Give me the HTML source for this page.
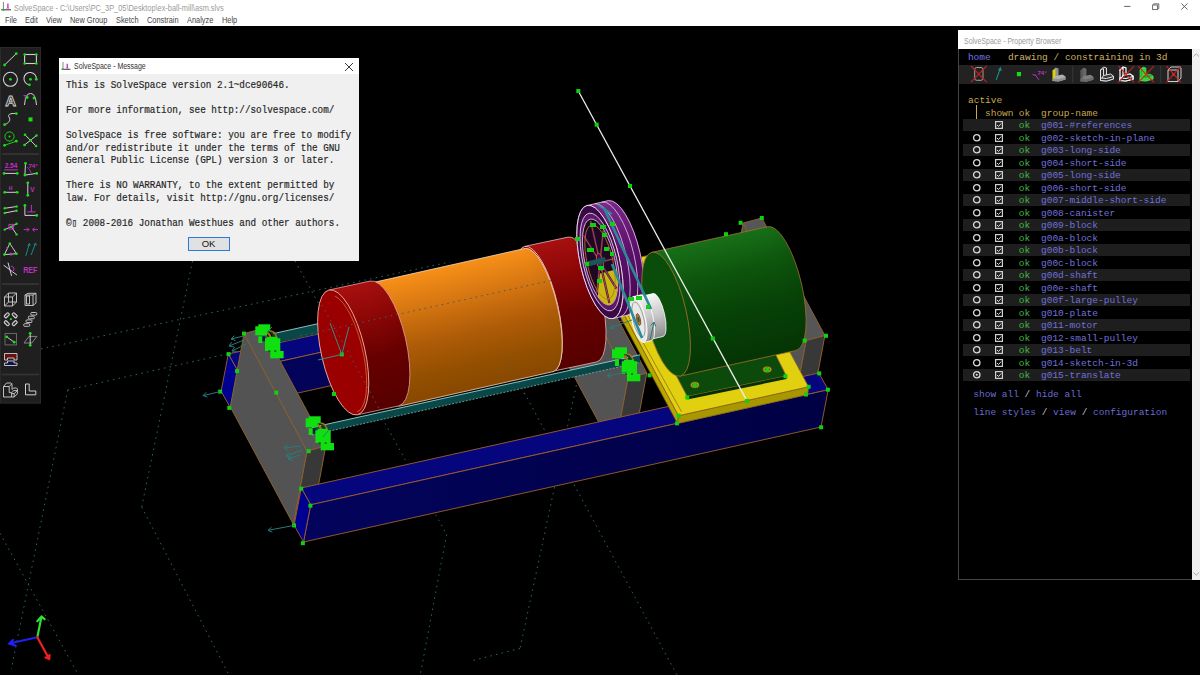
<!DOCTYPE html>
<html><head><meta charset="utf-8">
<style>
*{margin:0;padding:0;box-sizing:border-box}
body{width:1200px;height:675px;overflow:hidden;background:#000;position:relative;font-family:"Liberation Sans",sans-serif}
.abs{position:absolute}
#title{left:0;top:0;width:1200px;height:26.3px;background:#fff}
.sui{position:absolute;font-size:9px;line-height:10px;white-space:nowrap;transform:scaleX(0.82);transform-origin:0 0}
#dlg{left:59px;top:58px;width:300px;height:203px;background:#f0f0f0}
.dl{position:absolute;left:7px;font-family:"Liberation Mono",monospace;font-size:11px;line-height:12.5px;white-space:pre;color:#262626;-webkit-text-stroke:0.2px #262626;transform:scaleX(0.847);transform-origin:0 0}
#pb{left:958px;top:30px;width:242px;height:550px;background:#000}
.pt{position:absolute;font-family:"Liberation Mono",monospace;font-size:9.5px;line-height:13px;white-space:pre}
</style></head><body>
<svg class="abs" style="left:0;top:0" width="1200" height="675" viewBox="0 0 1200 675">
<defs><linearGradient id="gBeamF" x1="0" y1="0" x2="1" y2="0"><stop offset="0" stop-color="#03035c"/><stop offset="1" stop-color="#000044"/></linearGradient><linearGradient id="cg1" gradientUnits="userSpaceOnUse" x1="524.6" y1="246.4" x2="553.2" y2="371.2"><stop offset="0" stop-color="#a81010"/><stop offset="0.3" stop-color="#8a0606"/><stop offset="0.6" stop-color="#660000"/><stop offset="1" stop-color="#560000"/></linearGradient><linearGradient id="cg2" gradientUnits="userSpaceOnUse" x1="370.5" y1="283.1" x2="398.7" y2="406.3"><stop offset="0" stop-color="#f89018"/><stop offset="0.25" stop-color="#d87812"/><stop offset="0.55" stop-color="#b05c08"/><stop offset="0.8" stop-color="#945000"/><stop offset="1" stop-color="#884800"/></linearGradient><linearGradient id="cg3" gradientUnits="userSpaceOnUse" x1="328.9" y1="290.0" x2="357.5" y2="414.8"><stop offset="0" stop-color="#a81010"/><stop offset="0.3" stop-color="#8a0606"/><stop offset="0.6" stop-color="#660000"/><stop offset="1" stop-color="#560000"/></linearGradient><linearGradient id="cg4" gradientUnits="userSpaceOnUse" x1="587.1" y1="205.5" x2="612.9" y2="318.5"><stop offset="0" stop-color="#7a2a8a"/><stop offset="0.5" stop-color="#5a1068"/><stop offset="1" stop-color="#42084e"/></linearGradient><linearGradient id="cg5" gradientUnits="userSpaceOnUse" x1="651.9" y1="252.3" x2="680.3" y2="376.1"><stop offset="0" stop-color="#187018"/><stop offset="0.3" stop-color="#0d540d"/><stop offset="0.6" stop-color="#074207"/><stop offset="1" stop-color="#053405"/></linearGradient><linearGradient id="cg6" gradientUnits="userSpaceOnUse" x1="641.4" y1="296.3" x2="651.2" y2="339.2"><stop offset="0" stop-color="#f8f8f8"/><stop offset="0.5" stop-color="#c8c8c8"/><stop offset="1" stop-color="#8a8a8a"/></linearGradient><linearGradient id="cg7" gradientUnits="userSpaceOnUse" x1="633.3" y1="296.6" x2="643.7" y2="342.4"><stop offset="0" stop-color="#f8f8f8"/><stop offset="0.5" stop-color="#c8c8c8"/><stop offset="1" stop-color="#8a8a8a"/></linearGradient></defs>
<line x1="41.0" y1="349.0" x2="450.0" y2="262.0" stroke="#2a6464" stroke-width="1" stroke-dasharray="1.6 4.2"/>
<line x1="67.7" y1="390.0" x2="553.5" y2="280.0" stroke="#2a6464" stroke-width="1" stroke-dasharray="1.6 4.2"/>
<line x1="67.7" y1="390.0" x2="11.3" y2="669.3" stroke="#2a6464" stroke-width="1" stroke-dasharray="1.6 4.2"/>
<line x1="192.5" y1="261.0" x2="141.7" y2="506.9" stroke="#2a6464" stroke-width="1" stroke-dasharray="1.6 4.2"/>
<line x1="141.7" y1="506.9" x2="229.0" y2="675.0" stroke="#2a6464" stroke-width="1" stroke-dasharray="1.6 4.2"/>
<line x1="0.0" y1="533.3" x2="78.5" y2="675.0" stroke="#2a6464" stroke-width="1" stroke-dasharray="1.6 4.2"/>
<line x1="295.0" y1="261.0" x2="446.6" y2="534.4" stroke="#2a6464" stroke-width="1" stroke-dasharray="1.6 4.2"/>
<line x1="446.6" y1="534.4" x2="420.2" y2="675.0" stroke="#2a6464" stroke-width="1" stroke-dasharray="1.6 4.2"/>
<line x1="505.0" y1="357.0" x2="677.0" y2="675.0" stroke="#2a6464" stroke-width="1" stroke-dasharray="1.6 4.2"/>
<line x1="580.0" y1="368.0" x2="520.0" y2="648.5" stroke="#2a6464" stroke-width="1" stroke-dasharray="1.6 4.2"/>
<line x1="520.0" y1="648.5" x2="471.0" y2="661.0" stroke="#2a6464" stroke-width="1" stroke-dasharray="1.6 4.2"/>
<polygon points="228.3,354.0 745.8,239.0 755.2,255.8 237.7,370.8" fill="#05057e" stroke="#a0602a" stroke-width="0.9" />
<polygon points="237.7,370.8 755.2,255.8 748.0,293.0 230.5,408.0" fill="url(#gBeamF)" stroke="#a0602a" stroke-width="0.9" />
<polygon points="228.3,354.0 237.7,370.8 230.5,408.0 221.1,391.2" fill="#000090" stroke="#a0602a" stroke-width="0.9" />
<polygon points="743.1,223.1 806.2,340.6 792.5,413.9 729.4,296.4" fill="#535353" stroke="#8a6030" stroke-width="1" />
<polygon points="743.1,223.1 761.8,218.0 824.9,335.5 806.2,340.6" fill="#565656" stroke="#8a6030" stroke-width="1" />
<polygon points="806.2,340.6 824.9,335.5 811.2,408.8 792.5,413.9" fill="#383838" stroke="#8a6030" stroke-width="1" />
<polygon points="565.0,260.6 628.1,378.1 614.4,451.4 551.3,333.9" fill="#535353" stroke="#8a6030" stroke-width="1" />
<polygon points="565.0,260.6 583.7,255.5 646.8,373.0 628.1,378.1" fill="#565656" stroke="#8a6030" stroke-width="1" />
<polygon points="628.1,378.1 646.8,373.0 633.1,446.3 614.4,451.4" fill="#383838" stroke="#8a6030" stroke-width="1" />
<polygon points="244.0,333.6 307.1,451.1 293.4,524.4 230.3,406.9" fill="#535353" stroke="#8a6030" stroke-width="1" />
<polygon points="244.0,333.6 262.7,328.5 325.8,446.0 307.1,451.1" fill="#565656" stroke="#8a6030" stroke-width="1" />
<polygon points="307.1,451.1 325.8,446.0 312.1,519.3 293.4,524.4" fill="#383838" stroke="#8a6030" stroke-width="1" />
<polygon points="272.0,333.9 600.0,261.2 600.0,271.2 272.0,343.9" fill="#0a4848" />
<line x1="272.0" y1="333.9" x2="600.0" y2="261.2" stroke="#9ad0d0" stroke-width="0.9" />
<ellipse cx="582.5" cy="299.5" rx="19.2" ry="64.0" transform="rotate(-12.90 582.5 299.5)" fill="url(#cg1)" />
<polygon points="524.6,246.4 568.2,237.1 596.8,361.9 553.2,371.2" fill="url(#cg1)" />
<line x1="524.6" y1="246.4" x2="568.2" y2="237.1" stroke="#e8b8b8" stroke-width="0.8" />
<line x1="553.2" y1="371.2" x2="596.8" y2="361.9" stroke="#e8b8b8" stroke-width="0.8" />
<path d="M568.2,237.1 A19.2,64.0 -12.90 0 1 596.8,361.9" fill="none" stroke="#e8b8b8" stroke-width="0.8"/>
<ellipse cx="538.9" cy="308.8" rx="19.2" ry="64.0" transform="rotate(-12.90 538.9 308.8)" fill="#8c0404" stroke="#f0d0d0" stroke-width="0.8" />
<ellipse cx="539.2" cy="310.0" rx="19.0" ry="63.2" transform="rotate(-12.90 539.2 310.0)" fill="url(#cg2)" />
<polygon points="370.5,283.1 525.1,248.4 553.3,371.6 398.7,406.3" fill="url(#cg2)" />
<line x1="370.5" y1="283.1" x2="525.1" y2="248.4" stroke="#f4d8c0" stroke-width="0.8" />
<line x1="398.7" y1="406.3" x2="553.3" y2="371.6" stroke="#f4d8c0" stroke-width="0.8" />
<path d="M525.1,248.4 A19.0,63.2 -12.90 0 1 553.3,371.6" fill="none" stroke="#f4d8c0" stroke-width="0.8"/>
<ellipse cx="384.6" cy="344.7" rx="19.0" ry="63.2" transform="rotate(-12.90 384.6 344.7)" fill="#c06a10" />
<ellipse cx="384.3" cy="343.5" rx="21.8" ry="64.0" transform="rotate(-12.90 384.3 343.5)" fill="url(#cg3)" />
<polygon points="328.9,290.0 370.0,281.1 398.6,405.9 357.5,414.8" fill="url(#cg3)" />
<line x1="328.9" y1="290.0" x2="370.0" y2="281.1" stroke="#e0a0a0" stroke-width="0.8" />
<line x1="357.5" y1="414.8" x2="398.6" y2="405.9" stroke="#e0a0a0" stroke-width="0.8" />
<path d="M370.0,281.1 A21.8,64.0 -12.90 0 1 398.6,405.9" fill="none" stroke="#e0a0a0" stroke-width="0.8"/>
<ellipse cx="343.2" cy="352.4" rx="21.8" ry="64.0" transform="rotate(-12.90 343.2 352.4)" fill="#9a0000" stroke="#f0c0b0" stroke-width="0.8" />
<path d="M335,296 A20,60 -12.9 0 1 357,412" fill="none" stroke="#c87040" stroke-width="0.8"/>
<polygon points="312.0,427.5 640.0,354.8 640.0,362.3 312.0,435.0" fill="#0a4848" />
<line x1="312.0" y1="427.5" x2="640.0" y2="354.8" stroke="#9ad0d0" stroke-width="0.9" />
<line x1="312.0" y1="435.0" x2="640.0" y2="362.3" stroke="#80b0b0" stroke-width="0.8" stroke-dasharray="2 1.5"/>
<polygon points="301.3,488.0 818.8,373.0 828.2,389.8 310.7,504.8" fill="#05057e" stroke="#a0602a" stroke-width="0.9" />
<polygon points="310.7,504.8 828.2,389.8 821.0,427.0 303.5,542.0" fill="url(#gBeamF)" stroke="#a0602a" stroke-width="0.9" />
<polygon points="301.3,488.0 310.7,504.8 303.5,542.0 294.1,525.2" fill="#000090" stroke="#a0602a" stroke-width="0.9" />
<polygon points="598.4,266.5 678.5,415.7 677.6,423.5 597.5,274.3" fill="#b8a800" stroke="#8a6020" stroke-width="0.8" />
<polygon points="678.5,415.7 808.6,386.8 807.7,394.6 677.6,423.5" fill="#a89800" stroke="#8a6020" stroke-width="0.8" />
<polygon points="598.4,266.5 728.5,237.6 808.6,386.8 678.5,415.7" fill="#e0d010" stroke="#8a6020" stroke-width="0.8" />
<line x1="602.4" y1="269.5" x2="681.5" y2="411.7" stroke="#8a6020" stroke-width="0.7" />
<polygon points="675.6,374.5 774.9,353.0 786.4,376.0 687.2,396.5" fill="#0c4a0c" stroke="#a07030" stroke-width="0.8" />
<polygon points="687.2,396.5 786.4,376.0 786.6,379.0 687.4,399.5" fill="#062e06" />
<ellipse cx="694.9" cy="384.9" rx="4.2" ry="3" fill="#c8a020" stroke="#805010" stroke-width="0.6"/>
<ellipse cx="694.9" cy="384.9" rx="2.6" ry="1.9" fill="#0a3a0a"/>
<ellipse cx="767.2" cy="369.5" rx="4.2" ry="3" fill="#c8a020" stroke="#805010" stroke-width="0.6"/>
<ellipse cx="767.2" cy="369.5" rx="2.6" ry="1.9" fill="#0a3a0a"/>
<ellipse cx="621.4" cy="257.1" rx="19.7" ry="58.0" transform="rotate(-12.90 621.4 257.1)" fill="url(#cg4)" />
<polygon points="587.1,205.5 608.5,200.6 634.4,313.6 612.9,318.5" fill="url(#cg4)" />
<line x1="587.1" y1="205.5" x2="608.5" y2="200.6" stroke="#f0d0f0" stroke-width="0.8" />
<line x1="612.9" y1="318.5" x2="634.4" y2="313.6" stroke="#f0d0f0" stroke-width="0.8" />
<path d="M608.5,200.6 A19.7,58.0 -12.90 0 1 634.4,313.6" fill="none" stroke="#f0d0f0" stroke-width="0.8"/>
<ellipse cx="600.0" cy="262.0" rx="19.7" ry="58.0" transform="rotate(-12.90 600.0 262.0)" fill="#3a0642" stroke="#f0d0f0" stroke-width="0.8" />
<path d="M594.9,203.7 A19.7,58 -12.90 0 1 620.7,316.7" fill="none" stroke="#e8c8ec" stroke-width="0.8"/>
<path d="M601.7,202.1 A19.7,58 -12.90 0 1 627.6,315.2" fill="none" stroke="#e8c8ec" stroke-width="0.8"/>
<ellipse cx="600.0" cy="262.0" rx="19.7" ry="58.0" transform="rotate(-12.90 600.0 262.0)" fill="#3a0a44" stroke="#f0d8f0" stroke-width="0.9" />
<ellipse cx="600.0" cy="262.0" rx="17.0" ry="50.0" transform="rotate(-12.90 600.0 262.0)" fill="#5a1a6a" stroke="#f0d0f0" stroke-width="0.8" />
<ellipse cx="600.0" cy="262.0" rx="15.0" ry="44.0" transform="rotate(-12.90 600.0 262.0)" fill="#1e0824" stroke="#e8c0e8" stroke-width="0.8" />
<clipPath id="pint"><ellipse cx="600" cy="262" rx="15.0" ry="44" transform="rotate(-12.90 600 262)"/></clipPath>
<polygon clip-path="url(#pint)" points="598,274 630,266 630,322 598,322" fill="#c8b810"/>
<line x1="600.0" y1="262.0" x2="613.9" y2="258.8" stroke="#4a1050" stroke-width="2.2" />
<line x1="600.0" y1="262.0" x2="613.9" y2="258.8" stroke="#c07030" stroke-width="0.7" />
<line x1="600.0" y1="262.0" x2="616.5" y2="288.7" stroke="#4a1050" stroke-width="2.2" />
<line x1="600.0" y1="262.0" x2="616.5" y2="288.7" stroke="#c07030" stroke-width="0.7" />
<line x1="600.0" y1="262.0" x2="609.4" y2="302.9" stroke="#4a1050" stroke-width="2.2" />
<line x1="600.0" y1="262.0" x2="609.4" y2="302.9" stroke="#c07030" stroke-width="0.7" />
<line x1="600.0" y1="262.0" x2="596.8" y2="293.2" stroke="#4a1050" stroke-width="2.2" />
<line x1="600.0" y1="262.0" x2="596.8" y2="293.2" stroke="#c07030" stroke-width="0.7" />
<line x1="600.0" y1="262.0" x2="586.1" y2="265.2" stroke="#4a1050" stroke-width="2.2" />
<line x1="600.0" y1="262.0" x2="586.1" y2="265.2" stroke="#c07030" stroke-width="0.7" />
<line x1="600.0" y1="262.0" x2="583.5" y2="235.3" stroke="#4a1050" stroke-width="2.2" />
<line x1="600.0" y1="262.0" x2="583.5" y2="235.3" stroke="#c07030" stroke-width="0.7" />
<line x1="600.0" y1="262.0" x2="590.6" y2="221.1" stroke="#4a1050" stroke-width="2.2" />
<line x1="600.0" y1="262.0" x2="590.6" y2="221.1" stroke="#c07030" stroke-width="0.7" />
<line x1="600.0" y1="262.0" x2="603.2" y2="230.8" stroke="#4a1050" stroke-width="2.2" />
<line x1="600.0" y1="262.0" x2="603.2" y2="230.8" stroke="#c07030" stroke-width="0.7" />
<ellipse cx="600.0" cy="262.0" rx="12.9" ry="38.0" transform="rotate(-12.90 600.0 262.0)" fill="none" stroke="#c07030" stroke-width="0.8" />
<ellipse cx="600.0" cy="262.0" rx="3.1" ry="9.0" transform="rotate(-12.90 600.0 262.0)" fill="#4a0a5a" stroke="#c07030" stroke-width="0.8" />
<ellipse cx="600.0" cy="262.0" rx="1.4" ry="4.0" transform="rotate(-12.90 600.0 262.0)" fill="#1a5656" />
<polygon points="585.0,262.0 605.0,257.0 606.0,262.0 586.0,267.0" fill="#1a5656" />
<ellipse cx="781.8" cy="288.6" rx="20.3" ry="63.5" transform="rotate(-12.90 781.8 288.6)" fill="url(#cg5)" />
<polygon points="651.9,252.3 767.6,226.7 796.0,350.5 680.3,376.1" fill="url(#cg5)" />
<line x1="651.9" y1="252.3" x2="767.6" y2="226.7" stroke="#a07030" stroke-width="0.8" />
<line x1="680.3" y1="376.1" x2="796.0" y2="350.5" stroke="#a07030" stroke-width="0.8" />
<path d="M767.6,226.7 A20.3,63.5 -12.90 0 1 796.0,350.5" fill="none" stroke="#a07030" stroke-width="0.8"/>
<ellipse cx="666.1" cy="314.2" rx="20.3" ry="63.5" transform="rotate(-12.90 666.1 314.2)" fill="#0a4c0a" stroke="#a07030" stroke-width="0.8" />
<ellipse cx="658.0" cy="315.0" rx="6.6" ry="22.0" transform="rotate(-12.90 658.0 315.0)" fill="url(#cg6)" />
<polygon points="641.4,296.3 653.1,293.6 662.9,336.5 651.2,339.2" fill="url(#cg6)" />
<line x1="641.4" y1="296.3" x2="653.1" y2="293.6" stroke="#ffffff" stroke-width="0.8" />
<line x1="651.2" y1="339.2" x2="662.9" y2="336.5" stroke="#ffffff" stroke-width="0.8" />
<path d="M653.1,293.6 A6.6,22.0 -12.90 0 1 662.9,336.5" fill="none" stroke="#ffffff" stroke-width="0.8"/>
<ellipse cx="646.3" cy="317.7" rx="6.6" ry="22.0" transform="rotate(-12.90 646.3 317.7)" fill="#d8d8d8" stroke="#ffffff" stroke-width="0.8" />
<ellipse cx="646.3" cy="317.7" rx="5.1" ry="17.0" transform="rotate(-12.90 646.3 317.7)" fill="#9a9a9a" stroke="#c0c0c0" stroke-width="0.8" />
<ellipse cx="646.3" cy="317.7" rx="7.0" ry="23.5" transform="rotate(-12.90 646.3 317.7)" fill="url(#cg7)" />
<polygon points="633.3,296.6 641.1,294.8 651.5,340.6 643.7,342.4" fill="url(#cg7)" />
<line x1="633.3" y1="296.6" x2="641.1" y2="294.8" stroke="#ffffff" stroke-width="0.8" />
<line x1="643.7" y1="342.4" x2="651.5" y2="340.6" stroke="#ffffff" stroke-width="0.8" />
<path d="M641.1,294.8 A7.0,23.5 -12.90 0 1 651.5,340.6" fill="none" stroke="#ffffff" stroke-width="0.8"/>
<ellipse cx="638.5" cy="319.5" rx="7.0" ry="23.5" transform="rotate(-12.90 638.5 319.5)" fill="#e8e8e8" stroke="#ffffff" stroke-width="0.8" />
<ellipse cx="638.5" cy="319.5" rx="5.4" ry="18.0" transform="rotate(-12.90 638.5 319.5)" fill="none" stroke="#909090" stroke-width="0.8" />
<ellipse cx="638.5" cy="319.5" rx="1.8" ry="6.0" transform="rotate(-12.90 638.5 319.5)" fill="#c08030" stroke="#704010" stroke-width="0.8" />
<ellipse cx="638.5" cy="319.5" rx="0.9" ry="3.0" transform="rotate(-12.90 638.5 319.5)" fill="#1a5656" />
<line x1="604.0" y1="208.0" x2="651.0" y2="309.0" stroke="#2a8a98" stroke-width="2.6" />
<line x1="612.0" y1="264.0" x2="642.0" y2="338.0" stroke="#2a8a98" stroke-width="2.6" />
<line x1="598.0" y1="205.0" x2="612.0" y2="214.0" stroke="#2a8a98" stroke-width="2.0" />
<line x1="578.3" y1="91.0" x2="747.0" y2="400.9" stroke="#ececec" stroke-width="1.3" />
<path d="M264.3,332.3 q5,-2 8,10" stroke="#b06a20" stroke-width="2" fill="none"/>
<path d="M267.3,331.3 q5,-2 8,10" stroke="#0c3a0c" stroke-width="2" fill="none"/>
<path d="M270.3,331.3 q5,-1 7,9" stroke="#b06a20" stroke-width="1.6" fill="none"/>
<rect x="261.3" y="336.3" width="4" height="5" fill="#0a1a3a"/>
<rect x="255.3" y="326.3" width="8" height="9" fill="#10e010"/>
<rect x="258.3" y="324.3" width="12" height="7" fill="#10e010"/>
<rect x="261.3" y="328.3" width="6" height="7" fill="#10e010"/>
<rect x="265.0" y="338.3" width="15.3" height="12.7" fill="#10e010"/>
<rect x="267.3" y="336.8" width="10" height="4" fill="#10e010"/>
<rect x="270.3" y="351.0" width="13.3" height="7.3" fill="#10e010"/>
<rect x="258.3" y="336.3" width="4" height="6.7" fill="#10e010"/>
<rect x="268.3" y="350.3" width="2" height="1.5" fill="#0a5a0a"/><rect x="274.3" y="350.3" width="2" height="1.5" fill="#0a5a0a"/>
<path d="M314.7,424.3 q5,-2 8,10" stroke="#b06a20" stroke-width="2" fill="none"/>
<path d="M317.7,423.3 q5,-2 8,10" stroke="#0c3a0c" stroke-width="2" fill="none"/>
<path d="M320.7,423.3 q5,-1 7,9" stroke="#b06a20" stroke-width="1.6" fill="none"/>
<rect x="311.7" y="428.3" width="4" height="5" fill="#0a1a3a"/>
<rect x="305.7" y="418.3" width="8" height="9" fill="#10e010"/>
<rect x="308.7" y="416.3" width="12" height="7" fill="#10e010"/>
<rect x="311.7" y="420.3" width="6" height="7" fill="#10e010"/>
<rect x="315.4" y="430.3" width="15.3" height="12.7" fill="#10e010"/>
<rect x="317.7" y="428.8" width="10" height="4" fill="#10e010"/>
<rect x="320.7" y="443.0" width="13.3" height="7.3" fill="#10e010"/>
<rect x="308.7" y="428.3" width="4" height="6.7" fill="#10e010"/>
<rect x="318.7" y="442.3" width="2" height="1.5" fill="#0a5a0a"/><rect x="324.7" y="442.3" width="2" height="1.5" fill="#0a5a0a"/>
<path d="M621,355.3 q5,-2 8,10" stroke="#b06a20" stroke-width="2" fill="none"/>
<path d="M624,354.3 q5,-2 8,10" stroke="#0c3a0c" stroke-width="2" fill="none"/>
<path d="M627,354.3 q5,-1 7,9" stroke="#b06a20" stroke-width="1.6" fill="none"/>
<rect x="618" y="359.3" width="4" height="5" fill="#0a1a3a"/>
<rect x="612.0" y="349.3" width="8" height="9" fill="#10e010"/>
<rect x="615.0" y="347.3" width="12" height="7" fill="#10e010"/>
<rect x="618.0" y="351.3" width="6" height="7" fill="#10e010"/>
<rect x="621.7" y="361.3" width="15.3" height="12.7" fill="#10e010"/>
<rect x="624.0" y="359.8" width="10" height="4" fill="#10e010"/>
<rect x="627.0" y="374.0" width="13.3" height="7.3" fill="#10e010"/>
<rect x="615.0" y="359.3" width="4" height="6.7" fill="#10e010"/>
<rect x="625" y="373.3" width="2" height="1.5" fill="#0a5a0a"/><rect x="631" y="373.3" width="2" height="1.5" fill="#0a5a0a"/>
<rect x="590" y="223" width="6" height="4" fill="#10d010"/>
<rect x="600" y="225" width="6" height="4" fill="#10d010"/>
<rect x="610" y="222" width="5" height="4" fill="#10d010"/>
<rect x="602" y="233" width="5" height="4" fill="#10d010"/>
<rect x="587" y="248" width="7" height="4" fill="#10d010"/>
<rect x="604" y="247" width="5" height="4" fill="#10d010"/>
<rect x="610" y="252" width="4" height="4" fill="#10d010"/>
<rect x="585" y="262" width="4" height="4" fill="#10d010"/>
<rect x="598" y="266" width="6" height="4" fill="#10d010"/>
<rect x="597" y="279" width="5" height="4" fill="#10d010"/>
<rect x="575" y="237" width="5" height="4" fill="#10d010"/>
<rect x="628" y="297" width="6" height="4" fill="#10d010"/>
<rect x="636" y="296" width="6" height="4" fill="#10d010"/>
<rect x="646" y="305" width="4" height="4" fill="#10d010"/>
<rect x="576.3" y="89.0" width="4" height="4" fill="#10d010"/>
<rect x="594.7" y="122.7" width="4" height="4" fill="#10d010"/>
<rect x="628.0" y="184.0" width="4" height="4" fill="#10d010"/>
<rect x="710.8" y="336.5" width="4" height="4" fill="#10d010"/>
<rect x="745.0" y="398.9" width="4" height="4" fill="#10d010"/>
<rect x="724.0" y="232.2" width="4" height="4" fill="#10d010"/>
<rect x="738.6" y="220.8" width="4" height="4" fill="#10d010"/>
<rect x="759.8" y="216.0" width="4" height="4" fill="#10d010"/>
<rect x="824.0" y="333.8" width="4" height="4" fill="#10d010"/>
<rect x="802.7" y="338.6" width="4" height="4" fill="#10d010"/>
<rect x="817.2" y="371.4" width="4" height="4" fill="#10d010"/>
<rect x="825.9" y="387.7" width="4" height="4" fill="#10d010"/>
<rect x="819.1" y="425.3" width="4" height="4" fill="#10d010"/>
<rect x="806.6" y="384.8" width="4" height="4" fill="#10d010"/>
<rect x="804.0" y="392.5" width="4" height="4" fill="#10d010"/>
<rect x="783.5" y="374.2" width="4" height="4" fill="#10d010"/>
<rect x="685.2" y="395.4" width="4" height="4" fill="#10d010"/>
<rect x="676.5" y="413.7" width="4" height="4" fill="#10d010"/>
<rect x="675.0" y="421.4" width="4" height="4" fill="#10d010"/>
<rect x="647.6" y="373.3" width="4" height="4" fill="#10d010"/>
<rect x="242.0" y="331.6" width="4" height="4" fill="#10d010"/>
<rect x="226.6" y="352.1" width="4" height="4" fill="#10d010"/>
<rect x="235.1" y="369.1" width="4" height="4" fill="#10d010"/>
<rect x="218.1" y="389.6" width="4" height="4" fill="#10d010"/>
<rect x="227.3" y="405.9" width="4" height="4" fill="#10d010"/>
<rect x="274.3" y="390.6" width="4" height="4" fill="#10d010"/>
<rect x="306.7" y="449.2" width="4" height="4" fill="#10d010"/>
<rect x="299.2" y="486.7" width="4" height="4" fill="#10d010"/>
<rect x="308.4" y="503.7" width="4" height="4" fill="#10d010"/>
<rect x="292.0" y="523.4" width="4" height="4" fill="#10d010"/>
<rect x="300.9" y="541.2" width="4" height="4" fill="#10d010"/>
<rect x="339.8" y="352.4" width="4" height="4" fill="#10d010"/>
<rect x="332.0" y="392.0" width="4" height="4" fill="#10d010"/>
<rect x="692.9" y="382.9" width="4" height="4" fill="#10d010"/>
<rect x="765.2" y="367.5" width="4" height="4" fill="#10d010"/>
<line x1="341.8" y1="354.4" x2="330.0" y2="323.0" stroke="#3a8a8a" stroke-width="1" />
<line x1="341.8" y1="354.4" x2="349.0" y2="327.0" stroke="#3a8a8a" stroke-width="1" />
<line x1="341.8" y1="354.4" x2="318.0" y2="360.0" stroke="#3a8a8a" stroke-width="1" />
<line x1="300.0" y1="336.0" x2="553.5" y2="280.0" stroke="#4a5a5a" stroke-width="1" stroke-dasharray="1.6 4.2"/>
<line x1="322.0" y1="305.0" x2="380.0" y2="410.0" stroke="#4a5a5a" stroke-width="1" stroke-dasharray="1.6 4.2"/>
<line x1="505.0" y1="357.0" x2="525.0" y2="395.0" stroke="#4a5a5a" stroke-width="1" stroke-dasharray="1.6 4.2"/>
<path d="M220.0,391.6 L203.0,395.6 M207.5,397.1 L203.0,395.6 L206.3,392.3" fill="none" stroke="#2a7a7a" stroke-width="1"/>
<path d="M294.0,525.4 L268.0,530.4 M272.4,532.1 L268.0,530.4 L271.5,527.2" fill="none" stroke="#2a7a7a" stroke-width="1"/>
<path d="M244.0,336.0 L231.0,339.0 M235.5,340.5 L231.0,339.0 L234.3,335.7" fill="none" stroke="#2a7a7a" stroke-width="1"/>
<path d="M244.0,340.0 L229.0,346.0 M233.6,346.8 L229.0,346.0 L231.8,342.2" fill="none" stroke="#2a7a7a" stroke-width="1"/>
<path d="M246.0,344.0 L232.0,351.0 M236.7,351.4 L232.0,351.0 L234.5,347.0" fill="none" stroke="#2a7a7a" stroke-width="1"/>
<path d="M302.0,446.0 L284.0,448.0 M288.3,450.0 L284.0,448.0 L287.7,445.1" fill="none" stroke="#2a7a7a" stroke-width="1"/>
<path d="M302.0,450.0 L286.0,456.0 M290.6,456.9 L286.0,456.0 L288.9,452.3" fill="none" stroke="#2a7a7a" stroke-width="1"/>
<path d="M300.0,455.0 L288.0,459.0 M292.6,460.1 L288.0,459.0 L291.0,455.4" fill="none" stroke="#2a7a7a" stroke-width="1"/>
<path d="M627.0,372.0 L607.0,376.0 M611.4,377.7 L607.0,376.0 L610.4,372.8" fill="none" stroke="#2a7a7a" stroke-width="1"/>
<path d="M632.0,320.0 L610.0,328.0 M614.6,329.0 L610.0,328.0 L612.9,324.3" fill="none" stroke="#2a7a7a" stroke-width="1"/>
<path d="M650.0,340.0 L654.0,322.0 M650.7,325.4 L654.0,322.0 L655.6,326.4" fill="none" stroke="#2a7a7a" stroke-width="1"/>
<path d="M267,332 L272,327 M323,437 L328,431" stroke="#2a7a7a" stroke-width="1"/>
<g stroke-width="2.2" fill="none" stroke-linecap="round"><path d="M37.3,637.3 L41.5,616.6 M37.3,621.2 L41.5,616.6 L44.6,619.2" stroke="#30e030"/><path d="M37.3,637.3 L9.3,643.5 M13,640 L9.3,643.5 L15.5,645.6" stroke="#2020f0"/><path d="M37.3,637.3 L49.2,659 M45.5,657.5 L49.2,659 L49.5,655" stroke="#f02020"/></g>
</svg>
<div id="title" class="abs"><svg class="abs" style="left:0;top:0" width="14" height="14" viewBox="0 0 14 14">
<line x1="3.4" y1="2" x2="3.4" y2="10" stroke="#808080" stroke-width="1"/>
<line x1="1.2" y1="9.8" x2="11" y2="9.8" stroke="#404040" stroke-width="1.1"/>
<path d="M6.2,8.6 L9.6,8.6 L8.6,7.4 L8.6,3.6 L7.2,3.6 L7.2,7.4 Z" fill="#c040c0"/>
<circle cx="3.4" cy="9.8" r="1.1" fill="#20c020"/>
</svg>
<div class="sui" style="left:14.3px;top:2.8px;color:#9a9a9a">SolveSpace - C:\Users\PC_3P_05\Desktop\ex-ball-mill\asm.slvs</div>
<div class="sui" style="left:4.7px;top:15px;color:#444">File</div><div class="sui" style="left:24.5px;top:15px;color:#444">Edit</div><div class="sui" style="left:45.8px;top:15px;color:#444">View</div><div class="sui" style="left:70px;top:15px;color:#444">New Group</div><div class="sui" style="left:116px;top:15px;color:#444">Sketch</div><div class="sui" style="left:147px;top:15px;color:#444">Constrain</div><div class="sui" style="left:187px;top:15px;color:#444">Analyze</div><div class="sui" style="left:222px;top:15px;color:#444">Help</div><svg class="abs" style="left:1100px;top:0" width="100" height="14" viewBox="0 0 100 14">
<line x1="24.2" y1="6.4" x2="30.4" y2="6.4" stroke="#505050" stroke-width="0.9"/>
<rect x="52.6" y="5" width="4.8" height="4.6" fill="none" stroke="#606060" stroke-width="0.9"/>
<path d="M53.8,5 V3.8 H58.8 V8.6 H57.4" fill="none" stroke="#606060" stroke-width="0.9"/>
<path d="M81.3,3.4 L87.5,9.6 M87.5,3.4 L81.3,9.6" stroke="#505050" stroke-width="0.9"/>
</svg></div>
<svg class="abs" style="left:0;top:0" width="41" height="404" viewBox="0 0 41 404"><rect x="0" y="47" width="41" height="356.5" fill="#1f1f1f"/><rect x="0.5" y="47.5" width="40" height="355.5" fill="none" stroke="#2a2a2a" stroke-width="1"/><rect x="2" y="153.2" width="37" height="1.8" fill="#333333"/><rect x="2" y="283.2" width="37" height="1.8" fill="#333333"/><rect x="2" y="373.59999999999997" width="37" height="1.8" fill="#333333"/><line x1="4.6" y1="65" x2="16.3" y2="53.6" stroke="#d0d0d0" stroke-width="1"/><circle cx="4.6" cy="65" r="1.4" fill="#18e018"/><circle cx="16.3" cy="53.6" r="1.4" fill="#18e018"/><rect x="24.6" y="54.5" width="11.8" height="9" fill="none" stroke="#d0d0d0" stroke-width="1.1"/><circle cx="24.6" cy="54.5" r="1.2" fill="#18e018"/><circle cx="36.4" cy="54.5" r="1.2" fill="#18e018"/><circle cx="24.6" cy="63.5" r="1.2" fill="#18e018"/><circle cx="36.4" cy="63.5" r="1.2" fill="#18e018"/><circle cx="10.4" cy="79.3" r="7" fill="none" stroke="#d0d0d0" stroke-width="1.1"/><circle cx="10.4" cy="79.3" r="1.4" fill="#18e018"/><path d="M36.3,79.3 A6.2,6.2 0 1 0 29.4,84.8" fill="none" stroke="#d0d0d0" stroke-width="1.1"/><circle cx="30.5" cy="79.3" r="1.4" fill="#18e018"/><circle cx="36.3" cy="79.3" r="1.4" fill="#18e018"/><circle cx="29.4" cy="84.8" r="1.4" fill="#18e018"/><text x="10.7" y="105.5" font-family="Liberation Sans" font-size="15" font-weight="bold" text-anchor="middle" fill="none" stroke="#d0d0d0" stroke-width="0.9">A</text><path d="M24.5,105 Q25.5,93 30.5,93.5 Q35.5,93 36.5,105" fill="none" stroke="#d0d0d0" stroke-width="1"/><circle cx="27.2" cy="97.5" r="1.4" fill="#18e018"/><circle cx="34" cy="98" r="1.4" fill="#18e018"/><text x="25" y="99" font-family="Liberation Sans" font-size="6" font-weight="bold" text-anchor="middle" fill="#c030c0">T</text><path d="M4.6,124.7 C9,123 11,120 9,117 C7,114 12,113 16.3,113.6" fill="none" stroke="#d0d0d0" stroke-width="1"/><circle cx="4.6" cy="124.7" r="1.4" fill="#18e018"/><circle cx="16.3" cy="113.6" r="1.4" fill="#18e018"/><rect x="28.5" y="117.4" width="4" height="4" fill="#18e018"/><circle cx="9.5" cy="136.5" r="4.6" fill="none" stroke="#18e018" stroke-width="0.9"/><circle cx="9.5" cy="136.5" r="1" fill="#18e018"/><line x1="4.6" y1="145.3" x2="16.3" y2="141.2" stroke="#18e018" stroke-width="0.9"/><circle cx="4.6" cy="145.3" r="1.4" fill="#18e018"/><circle cx="16.3" cy="141.2" r="1.4" fill="#18e018"/><line x1="25" y1="134.8" x2="36" y2="146" stroke="#d0d0d0" stroke-width="1"/><line x1="24.5" y1="145" x2="36.5" y2="135.5" stroke="#d0d0d0" stroke-width="1"/><circle cx="25" cy="134.8" r="1.3" fill="#18e018"/><circle cx="36" cy="146" r="1.3" fill="#18e018"/><circle cx="24.5" cy="145" r="1.3" fill="#18e018"/><circle cx="36.5" cy="135.5" r="1.3" fill="#18e018"/><circle cx="30.5" cy="140.3" r="1.3" fill="#18e018"/><text x="11" y="168" font-family="Liberation Sans" font-size="6.5" font-weight="bold" text-anchor="middle" fill="#c030c0">2.54</text><line x1="4.1" y1="169.9" x2="17.8" y2="169.9" stroke="#c030c0" stroke-width="1"/><line x1="4.1" y1="173.4" x2="17.2" y2="173.4" stroke="#d0d0d0" stroke-width="1"/><circle cx="4.1" cy="173.4" r="1.4" fill="#18e018"/><circle cx="17.2" cy="173.4" r="1.4" fill="#18e018"/><line x1="24.9" y1="175.1" x2="25.5" y2="163.3" stroke="#d0d0d0" stroke-width="1"/><line x1="24.9" y1="175.1" x2="36.7" y2="173.4" stroke="#d0d0d0" stroke-width="1"/><circle cx="24.9" cy="175.1" r="1.4" fill="#18e018"/><circle cx="25.5" cy="163.3" r="1.4" fill="#18e018"/><circle cx="36.7" cy="173.4" r="1.4" fill="#18e018"/><text x="33" y="168" font-family="Liberation Sans" font-size="6" font-weight="bold" text-anchor="middle" fill="#c030c0">74°</text><path d="M27,167 Q30,169 31,173" fill="none" stroke="#c030c0" stroke-width="0.8"/><text x="10.6" y="190.3" font-family="Liberation Sans" font-size="5" font-weight="bold" text-anchor="middle" fill="#c030c0">H</text><line x1="4.7" y1="192.3" x2="17.2" y2="192.3" stroke="#d0d0d0" stroke-width="1"/><circle cx="4.7" cy="192.3" r="1.4" fill="#18e018"/><circle cx="17.2" cy="192.3" r="1.4" fill="#18e018"/><line x1="27.8" y1="182.8" x2="27.8" y2="195.3" stroke="#d0d0d0" stroke-width="1"/><circle cx="27.8" cy="182.8" r="1.4" fill="#18e018"/><circle cx="27.8" cy="195.3" r="1.4" fill="#18e018"/><text x="32.3" y="191.8" font-family="Liberation Sans" font-size="6.5" font-weight="bold" text-anchor="middle" fill="#c030c0">V</text><line x1="4.7" y1="208.3" x2="16.6" y2="206.5" stroke="#d0d0d0" stroke-width="1"/><line x1="4.7" y1="213" x2="16.6" y2="210.7" stroke="#d0d0d0" stroke-width="1"/><circle cx="4.7" cy="208.3" r="1.2" fill="#18e018"/><circle cx="16.6" cy="206.5" r="1.2" fill="#18e018"/><circle cx="4.7" cy="213" r="1.2" fill="#18e018"/><circle cx="16.6" cy="210.7" r="1.2" fill="#18e018"/><path d="M24.9,205.4 V215.4 H36.7" fill="none" stroke="#d0d0d0" stroke-width="1"/><circle cx="24.9" cy="205.4" r="1.4" fill="#18e018"/><circle cx="36.7" cy="215.4" r="1.4" fill="#18e018"/><path d="M31.4,204.8 V211.9 M27.3,211.9 H35.5" fill="none" stroke="#c030c0" stroke-width="1"/><line x1="4.7" y1="229.6" x2="11.3" y2="226.7" stroke="#d0d0d0" stroke-width="1"/><line x1="11.3" y1="226.7" x2="16.6" y2="234.4" stroke="#d0d0d0" stroke-width="1"/><line x1="11.3" y1="226.7" x2="16.6" y2="223.7" stroke="#d0d0d0" stroke-width="1"/><rect x="9" y="224.4" width="4.6" height="4.6" fill="none" stroke="#c030c0" stroke-width="1"/><circle cx="4.7" cy="229.6" r="1.2" fill="#18e018"/><circle cx="11.3" cy="226.7" r="1.2" fill="#18e018"/><circle cx="16.6" cy="234.4" r="1.2" fill="#18e018"/><circle cx="16.6" cy="223.7" r="1.2" fill="#18e018"/><path d="M23.7,229.6 H29 M27,227.6 L29,229.6 L27,231.6 M37.9,229.6 H32.6 M34.6,227.6 L32.6,229.6 L34.6,231.6" fill="none" stroke="#c030c0" stroke-width="1"/><path d="M9.8,243.5 L4.4,254.6 L16.5,253.7 Z" fill="none" stroke="#d0d0d0" stroke-width="1"/><circle cx="9.8" cy="243.5" r="1.3" fill="#18e018"/><circle cx="4.4" cy="254.6" r="1.3" fill="#18e018"/><circle cx="16.5" cy="253.7" r="1.3" fill="#18e018"/><line x1="6" y1="247.5" x2="8" y2="249" stroke="#c030c0" stroke-width="0.8"/><line x1="12.5" y1="247.5" x2="14" y2="249.5" stroke="#c030c0" stroke-width="0.8"/><line x1="10.5" y1="252.5" x2="11" y2="256" stroke="#c030c0" stroke-width="0.8"/><path d="M25.8,255.9 L29.4,243.5 M27.6,245.5 L29.4,243.5 L30.2,246 M31.1,255 L35.6,243 M33.8,245 L35.6,243 L36.2,245.5" fill="none" stroke="#1a8a8a" stroke-width="1"/><line x1="3.6" y1="265.2" x2="16.9" y2="275" stroke="#d0d0d0" stroke-width="1"/><line x1="8" y1="262.6" x2="11.6" y2="275.9" stroke="#d0d0d0" stroke-width="1"/><path d="M11,266 Q15,267 14,270 Q13,272 11,271" fill="none" stroke="#c030c0" stroke-width="1"/><text x="30.3" y="272.5" font-family="Liberation Sans" font-size="8.5" font-weight="bold" text-anchor="middle" fill="#c030c0" textLength="14.3" lengthAdjust="spacingAndGlyphs">REF</text><path d="M4.5,297 L8.5,293 H16.5 V302 L12.5,306 H4.5 Z M4.5,297 H12.5 V306 M12.5,297 L16.5,293 M8.5,293 V302 H16.5 M8.5,302 L4.5,306" fill="none" stroke="#d0d0d0" stroke-width="0.9"/><path d="M25,295 L28,293.3 H36 V303 L33,305.5 H25 Z M25,295 H33 V305.5 M33,295 L36,293.3" fill="none" stroke="#d0d0d0" stroke-width="0.9"/><rect x="26.5" y="296" width="3" height="8" fill="none" stroke="#d0d0d0" stroke-width="0.9"/><rect x="4.1" y="313.90000000000003" width="5.4" height="2.8" rx="1" fill="#303030" stroke="#d0d0d0" stroke-width="1.1" transform="rotate(-45 6.8 315.3)"/><rect x="12.0" y="313.90000000000003" width="5.4" height="2.8" rx="1" fill="#303030" stroke="#d0d0d0" stroke-width="1.1" transform="rotate(45 14.7 315.3)"/><rect x="4.1" y="321.8" width="5.4" height="2.8" rx="1" fill="#303030" stroke="#d0d0d0" stroke-width="1.1" transform="rotate(45 6.8 323.2)"/><rect x="12.0" y="321.8" width="5.4" height="2.8" rx="1" fill="#303030" stroke="#d0d0d0" stroke-width="1.1" transform="rotate(-45 14.7 323.2)"/><circle cx="10.9" cy="319.2" r="1.1" fill="#18e018"/><rect x="30.799999999999997" y="312.5" width="6" height="2.6" rx="1" fill="none" stroke="#d0d0d0" stroke-width="0.9"/><rect x="28.3" y="316.2" width="6" height="2.6" rx="1" fill="none" stroke="#d0d0d0" stroke-width="0.9"/><rect x="26" y="319.9" width="6" height="2.6" rx="1" fill="none" stroke="#d0d0d0" stroke-width="0.9"/><rect x="23.7" y="323.7" width="6" height="2.6" rx="1" fill="none" stroke="#d0d0d0" stroke-width="0.9"/><rect x="5" y="333.4" width="11.5" height="11.5" fill="none" stroke="#707070" stroke-width="0.9"/><line x1="6.7" y1="336.8" x2="14.2" y2="342.2" stroke="#d0d0d0" stroke-width="1"/><circle cx="6.7" cy="336.8" r="1.4" fill="#18e018"/><circle cx="14.2" cy="342.2" r="1.4" fill="#18e018"/><path d="M24,343 L29,336.4 H36.9 L31.9,343 Z" fill="none" stroke="#909090" stroke-width="0.9"/><line x1="30.2" y1="333.3" x2="30.2" y2="345.3" stroke="#d0d0d0" stroke-width="1"/><circle cx="30.2" cy="333.3" r="1.4" fill="#18e018"/><circle cx="30.2" cy="345.3" r="1.4" fill="#18e018"/><path d="M4.5,353.5 H17 V360 H14 V358 H7.5 V360 H4.5 Z" fill="#6a1010" stroke="#d0d0d0" stroke-width="0.9"/><path d="M7.5,361 H14 V363 H17 V365.5 H4.5 V363 H7.5 Z" fill="#101050" stroke="#d0d0d0" stroke-width="0.9"/><path d="M3.5,386.5 L6.5,383 H10.8 L12,384.2 V389.5 L13.8,388 H16.6 L17.4,389 V393.8 L14.2,397 H3.5 Z M3.5,386.5 H9.2 L12,383.6 M9.2,386.5 V392.6 H11.6 L13.8,390.6 H17.2 M11.6,392.6 V397 M14.2,393.6 V397 M11.6,393.6 H14.2 L17.4,390.6" fill="none" stroke="#d0d0d0" stroke-width="0.9"/><path d="M25.5,384 H29.2 V391 H35.8 V394.8 H25.5 Z" fill="none" stroke="#d0d0d0" stroke-width="1"/></svg>
<div id="dlg" class="abs">
<div class="abs" style="left:0;top:0;width:300px;height:15.5px;background:#fff"><svg class="abs" style="left:2px;top:3px" width="12" height="12" viewBox="0 0 12 12">
<line x1="2" y1="1" x2="2" y2="8.5" stroke="#808080" stroke-width="0.9"/>
<line x1="0.5" y1="8.3" x2="9.5" y2="8.3" stroke="#404040" stroke-width="1"/>
<path d="M4.6,7.4 L7.8,7.4 L7,6.4 L7,2.8 L5.6,2.8 L5.6,6.4 Z" fill="#c040c0"/>
<circle cx="2" cy="8.3" r="1" fill="#20c020"/>
</svg>
<div class="sui" style="left:15px;top:2.6px;font-size:8.5px;color:#333">SolveSpace - Message</div>
<svg class="abs" style="left:284px;top:3px" width="12" height="12" viewBox="0 0 12 12"><path d="M2,2 L10,10 M10,2 L2,10" stroke="#222" stroke-width="0.9"/></svg>
</div>
<div class="abs" style="left:0;top:0"><div class="dl" style="top:21.25px">This is SolveSpace version 2.1~dce90646.</div><div class="dl" style="top:46.25px">For more information, see http://solvespace.com/</div><div class="dl" style="top:71.25px">SolveSpace is free software: you are free to modify</div><div class="dl" style="top:83.75px">and/or redistribute it under the terms of the GNU</div><div class="dl" style="top:96.25px">General Public License (GPL) version 3 or later.</div><div class="dl" style="top:121.25px">There is NO WARRANTY, to the extent permitted by</div><div class="dl" style="top:133.75px">law. For details, visit http://gnu.org/licenses/</div><div class="dl" style="top:158.75px">©▯ 2008-2016 Jonathan Westhues and other authors.</div></div>
<div class="abs" style="left:128.5px;top:178.5px;width:42px;height:14.5px;border:1px solid #2a7ad8;background:#e1e1e1"></div>
<div class="abs" style="left:128.5px;top:180px;width:42px;text-align:center;font-size:9.5px;color:#111">OK</div>
</div>
<div id="pb" class="abs">
<div class="abs" style="left:0;top:0;width:242px;height:18.9px;background:#fff">
<div class="sui" style="left:6px;top:5.5px;font-size:8.5px;color:#9a9a9a">SolveSpace - Property Browser</div></div>
<div class="abs" style="left:0;top:18.9px;width:1px;height:531px;background:#444"></div>
<div class="abs" style="left:0;top:549px;width:233.5px;height:1px;background:#444"></div>
<div class="abs" style="left:233.5px;top:18.9px;width:8.5px;height:531px;background:#f0f0f0"></div>
<svg class="abs" style="left:233.5px;top:20px" width="8.5" height="10"><path d="M1.5,6.5 L4.25,3.8 L7,6.5" fill="none" stroke="#a0a0a0" stroke-width="0.9"/></svg>
<svg class="abs" style="left:233.5px;top:539px" width="8.5" height="10"><path d="M1.5,3.5 L4.25,6.2 L7,3.5" fill="none" stroke="#a0a0a0" stroke-width="0.9"/></svg>
<div class="pt" style="left:9.899999999999977px;top:20.799999999999997px;color:#7474e0">home</div>
<div class="pt" style="left:49.89999999999998px;top:20.799999999999997px;color:#d0b060">drawing / constraining in 3d</div>
<div class="abs" style="left:1px;top:34.599999999999994px;width:232.5px;height:19.8px;background:#222"></div>
<svg class="abs" style="left:-958px;top:-30px" width="1200" height="100" viewBox="0 0 1200 100"><rect x="974.7" y="67.5" width="8.3" height="12.8" rx="2" fill="none" stroke="#a0a0a0" stroke-width="1"/><path d="M971,66 L986.6,82.2 M986.6,66 L971,82.2" stroke="#d02020" stroke-width="1.2" opacity="0.9"/><path d="M996.2,79.9 L1000.4,68 M998.6,70.2 L1000.4,68 L1001.2,71" fill="none" stroke="#1a9090" stroke-width="1.1"/><rect x="1016.9" y="72" width="4.1" height="4.2" fill="#10e010"/><text x="1042" y="74.5" font-family="Liberation Sans" font-size="6" font-weight="bold" text-anchor="middle" fill="#c030c0">74°</text><path d="M1032.5,74.5 L1036,75.5 M1035,74.5 L1039,79.9" stroke="#c030c0" stroke-width="1"/><path d="M1052.5,70.5 L1055.5,67.5 L1058.5,68.5 L1058.5,75.5 L1055.5,78.5 Z" fill="#909090"/><path d="M1052.5,70.5 L1055.5,69.0 L1055.5,78.5 L1052.5,81.0 Z" fill="#d8d010"/><path d="M1055.5,76.0 L1062.5,74.5 L1065.5,76.5 L1065.5,79.5 L1058.5,81.5 L1052.5,81.0 Z" fill="#b0b0b0"/><path d="M1052.5,81.0 L1058.5,81.5 L1065.5,79.5 L1065.5,77.0 L1058.5,79.0 L1052.5,78.5 Z" fill="#909090"/><rect x="1072" y="66" width="1.3" height="17" fill="#333"/><path d="M1080.4,70.7 L1083.4,67.7 L1086.4,68.7 L1086.4,75.7 L1083.4,78.7 Z" fill="#6a6a6a"/><path d="M1080.4,70.7 L1083.4,69.2 L1083.4,78.7 L1080.4,81.2 Z" fill="#5a5a5a"/><path d="M1083.4,76.2 L1090.4,74.7 L1093.4,76.7 L1093.4,79.7 L1086.4,81.7 L1080.4,81.2 Z" fill="#808080"/><path d="M1080.4,81.2 L1086.4,81.7 L1093.4,79.7 L1093.4,77.2 L1086.4,79.2 L1080.4,78.7 Z" fill="#6a6a6a"/><path d="M1100.5,70 L1103.5,67 L1106.5,68 L1106.5,75 L1103.5,78 Z" fill="#303030" stroke="#e0e0e0" stroke-width="1"/><path d="M1100.5,70 L1103.5,68.5 L1103.5,78 L1100.5,80.5 Z" fill="#303030" stroke="#e0e0e0" stroke-width="1"/><path d="M1103.5,75.5 L1110.5,74 L1113.5,76 L1113.5,79 L1106.5,81 L1100.5,80.5 Z" fill="#3a3a3a" stroke="#e0e0e0" stroke-width="1"/><path d="M1100.5,80.5 L1106.5,81 L1113.5,79 L1113.5,76.5 L1106.5,78.5 L1100.5,78 Z" fill="#303030" stroke="#e0e0e0" stroke-width="1"/><path d="M1120,70 L1123,67 L1126,68 L1126,75 L1123,78 Z" fill="#202020" stroke="#ffffff" stroke-width="1.2"/><path d="M1120,70 L1123,68.5 L1123,78 L1120,80.5 Z" fill="#202020" stroke="#ffffff" stroke-width="1.2"/><path d="M1123,75.5 L1130,74 L1133,76 L1133,79 L1126,81 L1120,80.5 Z" fill="#202020" stroke="#ffffff" stroke-width="1.2"/><path d="M1120,80.5 L1126,81 L1133,79 L1133,76.5 L1126,78.5 L1120,78 Z" fill="#202020" stroke="#ffffff" stroke-width="1.2"/><path d="M1118.4,66.2 L1134,82.3 M1134,66.2 L1118.4,82.3" stroke="#d02020" stroke-width="1.2" opacity="0.9"/><path d="M1140,70 L1143,67 L1146,68 L1146,75 L1143,78 Z" fill="#30d030" stroke="#60e060" stroke-width="0.6"/><path d="M1140,70 L1143,68.5 L1143,78 L1140,80.5 Z" fill="#20c020" stroke="#60e060" stroke-width="0.6"/><path d="M1143,75.5 L1150,74 L1153,76 L1153,79 L1146,81 L1140,80.5 Z" fill="#20b020" stroke="#60e060" stroke-width="0.6"/><path d="M1140,80.5 L1146,81 L1153,79 L1153,76.5 L1146,78.5 L1140,78 Z" fill="#30d030" stroke="#60e060" stroke-width="0.6"/><path d="M1138.2,66.2 L1153.9,82.3 M1153.9,66.2 L1138.2,82.3" stroke="#d02020" stroke-width="1.2" opacity="0.9"/><rect x="1160" y="66" width="1.3" height="17" fill="#333"/><path d="M1168,70 L1171,67 H1180 L1181,68 V78 L1178,81.5 H1168 Z M1168,70 H1178 V81.5" fill="none" stroke="#d0d0d0" stroke-width="1"/><rect x="1172" y="73" width="3" height="3" fill="#d02020"/><path d="M1166.4,66.2 L1181,82.3 M1181,66.2 L1166.4,82.3" stroke="#d02020" stroke-width="1.2" opacity="0.9"/></svg>
<div class="pt" style="left:10px;top:64.2px;color:#c8a850">active</div>
<div class="abs" style="left:18px;top:75px;width:1.3px;height:25.3px;background:#c8a850"></div>
<div class="pt" style="left:27px;top:76.9px;color:#c8a850">shown</div>
<div class="pt" style="left:60.700000000000045px;top:76.9px;color:#c8a850">ok</div>
<div class="pt" style="left:83px;top:76.9px;color:#c8a850">group-name</div>
<div class="abs" style="left:4.7000000000000455px;top:88.75px;width:227.29999999999995px;height:12.2px;background:#1e1e1e"></div><div class="abs" style="left:4.7000000000000455px;top:113.75px;width:227.29999999999995px;height:12.2px;background:#1e1e1e"></div><div class="abs" style="left:4.7000000000000455px;top:138.75px;width:227.29999999999995px;height:12.2px;background:#1e1e1e"></div><div class="abs" style="left:4.7000000000000455px;top:163.75px;width:227.29999999999995px;height:12.2px;background:#1e1e1e"></div><div class="abs" style="left:4.7000000000000455px;top:188.75px;width:227.29999999999995px;height:12.2px;background:#1e1e1e"></div><div class="abs" style="left:4.7000000000000455px;top:213.75px;width:227.29999999999995px;height:12.2px;background:#1e1e1e"></div><div class="abs" style="left:4.7000000000000455px;top:238.75px;width:227.29999999999995px;height:12.2px;background:#1e1e1e"></div><div class="abs" style="left:4.7000000000000455px;top:263.75px;width:227.29999999999995px;height:12.2px;background:#1e1e1e"></div><div class="abs" style="left:4.7000000000000455px;top:288.75px;width:227.29999999999995px;height:12.2px;background:#1e1e1e"></div><div class="abs" style="left:4.7000000000000455px;top:313.75px;width:227.29999999999995px;height:12.2px;background:#1e1e1e"></div><div class="abs" style="left:4.7000000000000455px;top:338.75px;width:227.29999999999995px;height:12.2px;background:#1e1e1e"></div><svg class="abs" style="left:37.200000000000045px;top:91.00px" width="8" height="8"><rect x="0.6" y="0.6" width="6.8" height="6.8" fill="none" stroke="#d0d0d0" stroke-width="1.2"/><path d="M2,4 L3.5,5.5 L6.2,2.5" fill="none" stroke="#e0e0e0" stroke-width="1"/></svg><div class="pt" style="left:60.700000000000045px;top:89.10px;color:#44b844">ok</div><div class="pt" style="left:83px;top:89.10px;color:#7070dc">g001-#references</div><svg class="abs" style="left:13.5px;top:102.75px" width="9.5" height="9.5"><circle cx="4.75" cy="4.75" r="3.2" fill="none" stroke="#d8d8d8" stroke-width="1.3"/></svg><svg class="abs" style="left:37.200000000000045px;top:103.50px" width="8" height="8"><rect x="0.6" y="0.6" width="6.8" height="6.8" fill="none" stroke="#d0d0d0" stroke-width="1.2"/><path d="M2,4 L3.5,5.5 L6.2,2.5" fill="none" stroke="#e0e0e0" stroke-width="1"/></svg><div class="pt" style="left:60.700000000000045px;top:101.60px;color:#44b844">ok</div><div class="pt" style="left:83px;top:101.60px;color:#7070dc">g002-sketch-in-plane</div><svg class="abs" style="left:13.5px;top:115.25px" width="9.5" height="9.5"><circle cx="4.75" cy="4.75" r="3.2" fill="none" stroke="#d8d8d8" stroke-width="1.3"/></svg><svg class="abs" style="left:37.200000000000045px;top:116.00px" width="8" height="8"><rect x="0.6" y="0.6" width="6.8" height="6.8" fill="none" stroke="#d0d0d0" stroke-width="1.2"/><path d="M2,4 L3.5,5.5 L6.2,2.5" fill="none" stroke="#e0e0e0" stroke-width="1"/></svg><div class="pt" style="left:60.700000000000045px;top:114.10px;color:#44b844">ok</div><div class="pt" style="left:83px;top:114.10px;color:#7070dc">g003-long-side</div><svg class="abs" style="left:13.5px;top:127.75px" width="9.5" height="9.5"><circle cx="4.75" cy="4.75" r="3.2" fill="none" stroke="#d8d8d8" stroke-width="1.3"/></svg><svg class="abs" style="left:37.200000000000045px;top:128.50px" width="8" height="8"><rect x="0.6" y="0.6" width="6.8" height="6.8" fill="none" stroke="#d0d0d0" stroke-width="1.2"/><path d="M2,4 L3.5,5.5 L6.2,2.5" fill="none" stroke="#e0e0e0" stroke-width="1"/></svg><div class="pt" style="left:60.700000000000045px;top:126.60px;color:#44b844">ok</div><div class="pt" style="left:83px;top:126.60px;color:#7070dc">g004-short-side</div><svg class="abs" style="left:13.5px;top:140.25px" width="9.5" height="9.5"><circle cx="4.75" cy="4.75" r="3.2" fill="none" stroke="#d8d8d8" stroke-width="1.3"/></svg><svg class="abs" style="left:37.200000000000045px;top:141.00px" width="8" height="8"><rect x="0.6" y="0.6" width="6.8" height="6.8" fill="none" stroke="#d0d0d0" stroke-width="1.2"/><path d="M2,4 L3.5,5.5 L6.2,2.5" fill="none" stroke="#e0e0e0" stroke-width="1"/></svg><div class="pt" style="left:60.700000000000045px;top:139.10px;color:#44b844">ok</div><div class="pt" style="left:83px;top:139.10px;color:#7070dc">g005-long-side</div><svg class="abs" style="left:13.5px;top:152.75px" width="9.5" height="9.5"><circle cx="4.75" cy="4.75" r="3.2" fill="none" stroke="#d8d8d8" stroke-width="1.3"/></svg><svg class="abs" style="left:37.200000000000045px;top:153.50px" width="8" height="8"><rect x="0.6" y="0.6" width="6.8" height="6.8" fill="none" stroke="#d0d0d0" stroke-width="1.2"/><path d="M2,4 L3.5,5.5 L6.2,2.5" fill="none" stroke="#e0e0e0" stroke-width="1"/></svg><div class="pt" style="left:60.700000000000045px;top:151.60px;color:#44b844">ok</div><div class="pt" style="left:83px;top:151.60px;color:#7070dc">g006-short-side</div><svg class="abs" style="left:13.5px;top:165.25px" width="9.5" height="9.5"><circle cx="4.75" cy="4.75" r="3.2" fill="none" stroke="#d8d8d8" stroke-width="1.3"/></svg><svg class="abs" style="left:37.200000000000045px;top:166.00px" width="8" height="8"><rect x="0.6" y="0.6" width="6.8" height="6.8" fill="none" stroke="#d0d0d0" stroke-width="1.2"/><path d="M2,4 L3.5,5.5 L6.2,2.5" fill="none" stroke="#e0e0e0" stroke-width="1"/></svg><div class="pt" style="left:60.700000000000045px;top:164.10px;color:#44b844">ok</div><div class="pt" style="left:83px;top:164.10px;color:#7070dc">g007-middle-short-side</div><svg class="abs" style="left:13.5px;top:177.75px" width="9.5" height="9.5"><circle cx="4.75" cy="4.75" r="3.2" fill="none" stroke="#d8d8d8" stroke-width="1.3"/></svg><svg class="abs" style="left:37.200000000000045px;top:178.50px" width="8" height="8"><rect x="0.6" y="0.6" width="6.8" height="6.8" fill="none" stroke="#d0d0d0" stroke-width="1.2"/><path d="M2,4 L3.5,5.5 L6.2,2.5" fill="none" stroke="#e0e0e0" stroke-width="1"/></svg><div class="pt" style="left:60.700000000000045px;top:176.60px;color:#44b844">ok</div><div class="pt" style="left:83px;top:176.60px;color:#7070dc">g008-canister</div><svg class="abs" style="left:13.5px;top:190.25px" width="9.5" height="9.5"><circle cx="4.75" cy="4.75" r="3.2" fill="none" stroke="#d8d8d8" stroke-width="1.3"/></svg><svg class="abs" style="left:37.200000000000045px;top:191.00px" width="8" height="8"><rect x="0.6" y="0.6" width="6.8" height="6.8" fill="none" stroke="#d0d0d0" stroke-width="1.2"/><path d="M2,4 L3.5,5.5 L6.2,2.5" fill="none" stroke="#e0e0e0" stroke-width="1"/></svg><div class="pt" style="left:60.700000000000045px;top:189.10px;color:#44b844">ok</div><div class="pt" style="left:83px;top:189.10px;color:#7070dc">g009-block</div><svg class="abs" style="left:13.5px;top:202.75px" width="9.5" height="9.5"><circle cx="4.75" cy="4.75" r="3.2" fill="none" stroke="#d8d8d8" stroke-width="1.3"/></svg><svg class="abs" style="left:37.200000000000045px;top:203.50px" width="8" height="8"><rect x="0.6" y="0.6" width="6.8" height="6.8" fill="none" stroke="#d0d0d0" stroke-width="1.2"/><path d="M2,4 L3.5,5.5 L6.2,2.5" fill="none" stroke="#e0e0e0" stroke-width="1"/></svg><div class="pt" style="left:60.700000000000045px;top:201.60px;color:#44b844">ok</div><div class="pt" style="left:83px;top:201.60px;color:#7070dc">g00a-block</div><svg class="abs" style="left:13.5px;top:215.25px" width="9.5" height="9.5"><circle cx="4.75" cy="4.75" r="3.2" fill="none" stroke="#d8d8d8" stroke-width="1.3"/></svg><svg class="abs" style="left:37.200000000000045px;top:216.00px" width="8" height="8"><rect x="0.6" y="0.6" width="6.8" height="6.8" fill="none" stroke="#d0d0d0" stroke-width="1.2"/><path d="M2,4 L3.5,5.5 L6.2,2.5" fill="none" stroke="#e0e0e0" stroke-width="1"/></svg><div class="pt" style="left:60.700000000000045px;top:214.10px;color:#44b844">ok</div><div class="pt" style="left:83px;top:214.10px;color:#7070dc">g00b-block</div><svg class="abs" style="left:13.5px;top:227.75px" width="9.5" height="9.5"><circle cx="4.75" cy="4.75" r="3.2" fill="none" stroke="#d8d8d8" stroke-width="1.3"/></svg><svg class="abs" style="left:37.200000000000045px;top:228.50px" width="8" height="8"><rect x="0.6" y="0.6" width="6.8" height="6.8" fill="none" stroke="#d0d0d0" stroke-width="1.2"/><path d="M2,4 L3.5,5.5 L6.2,2.5" fill="none" stroke="#e0e0e0" stroke-width="1"/></svg><div class="pt" style="left:60.700000000000045px;top:226.60px;color:#44b844">ok</div><div class="pt" style="left:83px;top:226.60px;color:#7070dc">g00c-block</div><svg class="abs" style="left:13.5px;top:240.25px" width="9.5" height="9.5"><circle cx="4.75" cy="4.75" r="3.2" fill="none" stroke="#d8d8d8" stroke-width="1.3"/></svg><svg class="abs" style="left:37.200000000000045px;top:241.00px" width="8" height="8"><rect x="0.6" y="0.6" width="6.8" height="6.8" fill="none" stroke="#d0d0d0" stroke-width="1.2"/><path d="M2,4 L3.5,5.5 L6.2,2.5" fill="none" stroke="#e0e0e0" stroke-width="1"/></svg><div class="pt" style="left:60.700000000000045px;top:239.10px;color:#44b844">ok</div><div class="pt" style="left:83px;top:239.10px;color:#7070dc">g00d-shaft</div><svg class="abs" style="left:13.5px;top:252.75px" width="9.5" height="9.5"><circle cx="4.75" cy="4.75" r="3.2" fill="none" stroke="#d8d8d8" stroke-width="1.3"/></svg><svg class="abs" style="left:37.200000000000045px;top:253.50px" width="8" height="8"><rect x="0.6" y="0.6" width="6.8" height="6.8" fill="none" stroke="#d0d0d0" stroke-width="1.2"/><path d="M2,4 L3.5,5.5 L6.2,2.5" fill="none" stroke="#e0e0e0" stroke-width="1"/></svg><div class="pt" style="left:60.700000000000045px;top:251.60px;color:#44b844">ok</div><div class="pt" style="left:83px;top:251.60px;color:#7070dc">g00e-shaft</div><svg class="abs" style="left:13.5px;top:265.25px" width="9.5" height="9.5"><circle cx="4.75" cy="4.75" r="3.2" fill="none" stroke="#d8d8d8" stroke-width="1.3"/></svg><svg class="abs" style="left:37.200000000000045px;top:266.00px" width="8" height="8"><rect x="0.6" y="0.6" width="6.8" height="6.8" fill="none" stroke="#d0d0d0" stroke-width="1.2"/><path d="M2,4 L3.5,5.5 L6.2,2.5" fill="none" stroke="#e0e0e0" stroke-width="1"/></svg><div class="pt" style="left:60.700000000000045px;top:264.10px;color:#44b844">ok</div><div class="pt" style="left:83px;top:264.10px;color:#7070dc">g00f-large-pulley</div><svg class="abs" style="left:13.5px;top:277.75px" width="9.5" height="9.5"><circle cx="4.75" cy="4.75" r="3.2" fill="none" stroke="#d8d8d8" stroke-width="1.3"/></svg><svg class="abs" style="left:37.200000000000045px;top:278.50px" width="8" height="8"><rect x="0.6" y="0.6" width="6.8" height="6.8" fill="none" stroke="#d0d0d0" stroke-width="1.2"/><path d="M2,4 L3.5,5.5 L6.2,2.5" fill="none" stroke="#e0e0e0" stroke-width="1"/></svg><div class="pt" style="left:60.700000000000045px;top:276.60px;color:#44b844">ok</div><div class="pt" style="left:83px;top:276.60px;color:#7070dc">g010-plate</div><svg class="abs" style="left:13.5px;top:290.25px" width="9.5" height="9.5"><circle cx="4.75" cy="4.75" r="3.2" fill="none" stroke="#d8d8d8" stroke-width="1.3"/></svg><svg class="abs" style="left:37.200000000000045px;top:291.00px" width="8" height="8"><rect x="0.6" y="0.6" width="6.8" height="6.8" fill="none" stroke="#d0d0d0" stroke-width="1.2"/><path d="M2,4 L3.5,5.5 L6.2,2.5" fill="none" stroke="#e0e0e0" stroke-width="1"/></svg><div class="pt" style="left:60.700000000000045px;top:289.10px;color:#44b844">ok</div><div class="pt" style="left:83px;top:289.10px;color:#7070dc">g011-motor</div><svg class="abs" style="left:13.5px;top:302.75px" width="9.5" height="9.5"><circle cx="4.75" cy="4.75" r="3.2" fill="none" stroke="#d8d8d8" stroke-width="1.3"/></svg><svg class="abs" style="left:37.200000000000045px;top:303.50px" width="8" height="8"><rect x="0.6" y="0.6" width="6.8" height="6.8" fill="none" stroke="#d0d0d0" stroke-width="1.2"/><path d="M2,4 L3.5,5.5 L6.2,2.5" fill="none" stroke="#e0e0e0" stroke-width="1"/></svg><div class="pt" style="left:60.700000000000045px;top:301.60px;color:#44b844">ok</div><div class="pt" style="left:83px;top:301.60px;color:#7070dc">g012-small-pulley</div><svg class="abs" style="left:13.5px;top:315.25px" width="9.5" height="9.5"><circle cx="4.75" cy="4.75" r="3.2" fill="none" stroke="#d8d8d8" stroke-width="1.3"/></svg><svg class="abs" style="left:37.200000000000045px;top:316.00px" width="8" height="8"><rect x="0.6" y="0.6" width="6.8" height="6.8" fill="none" stroke="#d0d0d0" stroke-width="1.2"/><path d="M2,4 L3.5,5.5 L6.2,2.5" fill="none" stroke="#e0e0e0" stroke-width="1"/></svg><div class="pt" style="left:60.700000000000045px;top:314.10px;color:#44b844">ok</div><div class="pt" style="left:83px;top:314.10px;color:#7070dc">g013-belt</div><svg class="abs" style="left:13.5px;top:327.75px" width="9.5" height="9.5"><circle cx="4.75" cy="4.75" r="3.2" fill="none" stroke="#d8d8d8" stroke-width="1.3"/></svg><svg class="abs" style="left:37.200000000000045px;top:328.50px" width="8" height="8"><rect x="0.6" y="0.6" width="6.8" height="6.8" fill="none" stroke="#d0d0d0" stroke-width="1.2"/><path d="M2,4 L3.5,5.5 L6.2,2.5" fill="none" stroke="#e0e0e0" stroke-width="1"/></svg><div class="pt" style="left:60.700000000000045px;top:326.60px;color:#44b844">ok</div><div class="pt" style="left:83px;top:326.60px;color:#7070dc">g014-sketch-in-3d</div><svg class="abs" style="left:13.5px;top:340.25px" width="9.5" height="9.5"><circle cx="4.75" cy="4.75" r="3.2" fill="none" stroke="#d8d8d8" stroke-width="1.3"/><circle cx="4.75" cy="4.75" r="1.1" fill="#d8d8d8"/></svg><svg class="abs" style="left:37.200000000000045px;top:341.00px" width="8" height="8"><rect x="0.6" y="0.6" width="6.8" height="6.8" fill="none" stroke="#d0d0d0" stroke-width="1.2"/><path d="M2,4 L3.5,5.5 L6.2,2.5" fill="none" stroke="#e0e0e0" stroke-width="1"/></svg><div class="pt" style="left:60.700000000000045px;top:339.10px;color:#44b844">ok</div><div class="pt" style="left:83px;top:339.10px;color:#7070dc">g015-translate</div>
<div class="pt" style="left:15.299999999999955px;top:357.5px;color:#6a6ad0">show all <span style="color:#c0c0c0">/</span> hide all</div>
<div class="pt" style="left:15.299999999999955px;top:376.2px;color:#6a6ad0">line styles <span style="color:#c0c0c0">/</span> view <span style="color:#c0c0c0">/</span> configuration</div>
</div>
</body></html>
